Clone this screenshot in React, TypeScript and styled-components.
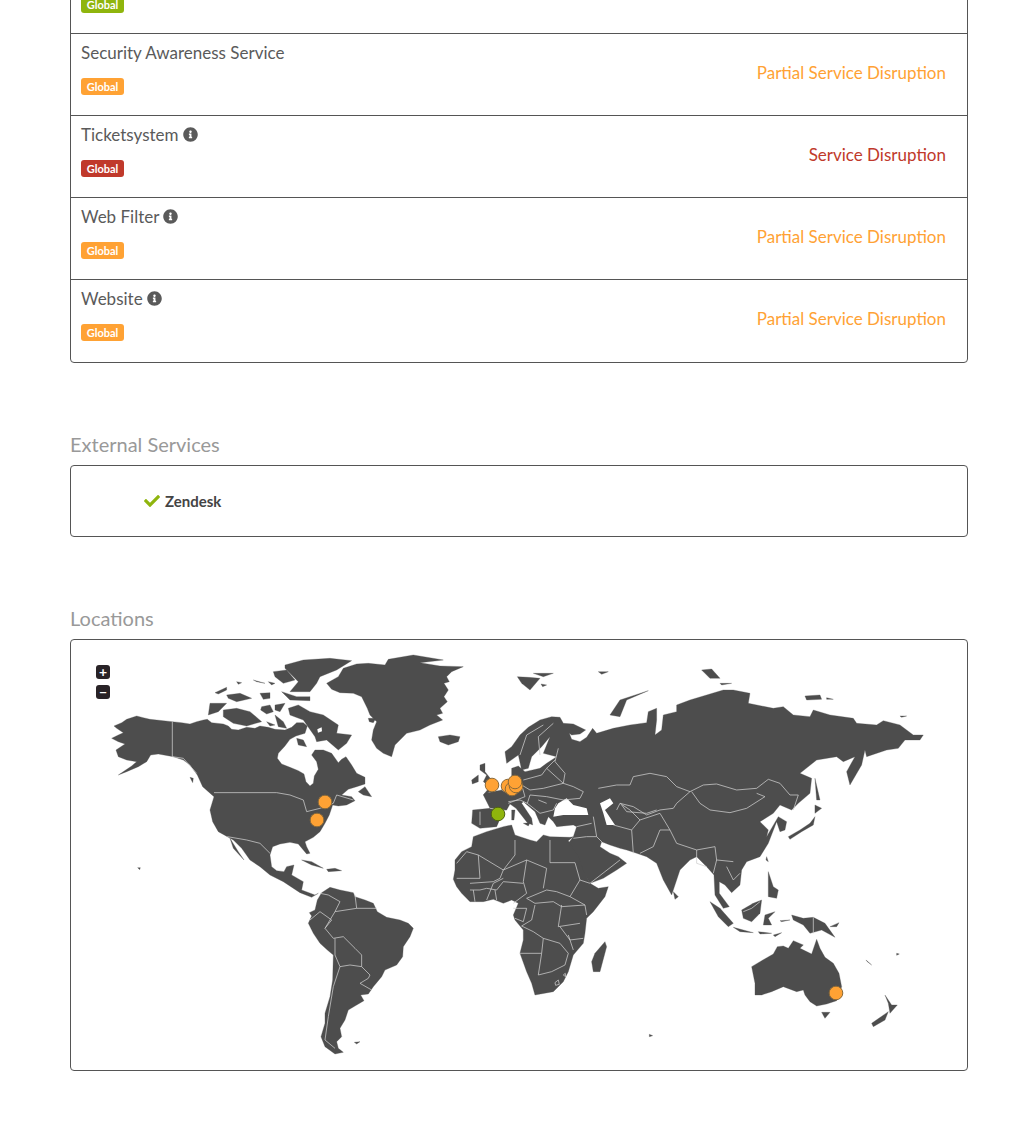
import React from "react";
import styled, { createGlobalStyle } from "styled-components";
import { FaCheck, FaInfoCircle } from "react-icons/fa";

const GlobalStyle = createGlobalStyle`
  html, body {
    margin: 0;
    padding: 0;
    background: #fff;
    font-family: Lato, "Open Sans", sans-serif;
    overflow: hidden;
  }
`;

type Level = "ok" | "partial" | "down";

const levelColor: Record<Level, string> = {
  ok: "#8fb50d",
  partial: "#ffa234",
  down: "#c0392b",
};

const Page = styled.div`
  width: 898px;
  height: 1137px;
  margin-left: 70px;
  overflow: hidden;
`;

const ServiceList = styled.div`
  margin-top: -49px;
  padding-bottom: 1px;
  border: 1px solid #555;
  border-radius: 4px;
`;

const Row = styled.div`
  height: 81px;
  display: flex;
  justify-content: space-between;
  align-items: center;
  padding: 0 21px 0 10px;
  & + & {
    border-top: 1px solid #555;
  }
`;

const RowLeft = styled.div`
  align-self: flex-start;
  display: flex;
  flex-direction: column;
  align-items: flex-start;
  gap: 15px;
  padding-top: 7px;
`;

const Name = styled.div`
  display: flex;
  align-items: center;
  gap: 4px;
  height: 22px;
  font-size: 17px;
  color: #5a5a5a;
  svg {
    width: 15px;
    height: 15px;
  }
`;

const Badge = styled.span<{ $level: Level }>`
  width: 43px;
  height: 17px;
  line-height: 17px;
  text-align: center;
  border-radius: 3px;
  font-size: 11px;
  font-weight: 700;
  color: #fff;
  background: ${(p) => levelColor[p.$level]};
`;

const Status = styled.div<{ $level: Level }>`
  margin-top: -4px;
  font-size: 17px;
  color: ${(p) => levelColor[p.$level]};
`;

const Heading = styled.h3`
  margin: 0 0 9px;
  height: 24px;
  line-height: 24px;
  font-size: 20px;
  font-weight: 400;
  color: #999;
`;

const Section = styled.section`
  margin-top: 69px;
`;

const ExternalBox = styled.div`
  height: 70px;
  display: flex;
  align-items: center;
  padding-left: 73px;
  gap: 5px;
  border: 1px solid #555;
  border-radius: 4px;
  font-size: 15px;
  font-weight: 700;
  color: #444;
  svg {
    width: 16px;
    height: 16px;
    color: #8fb50d;
  }
`;

const MapBox = styled.div`
  position: relative;
  height: 430px;
  border: 1px solid #555;
  border-radius: 4px;
`;

const ZoomControls = styled.div`
  position: absolute;
  top: 25px;
  left: 25px;
  display: flex;
  flex-direction: column;
  gap: 6px;
`;

const ZoomButton = styled.div`
  width: 14px;
  height: 14px;
  line-height: 13px;
  text-align: center;
  border-radius: 3px;
  background: #292327;
  color: #fff;
  font-size: 14px;
  font-weight: 700;
`;

const MapSvg = styled.svg`
  display: block;
`;

const Land = styled.path`
  fill: #4d4d4d;
  stroke: #4d4d4d;
  stroke-width: 0.3px;
  stroke-linejoin: round;
  vector-effect: non-scaling-stroke;
`;

const Sea = styled.path`
  fill: #fff;
`;

const Border = styled.path`
  fill: none;
  stroke: #cfcfcf;
  stroke-width: 0.75px;
  stroke-linejoin: round;
  vector-effect: non-scaling-stroke;
`;

const Pin = styled.circle<{ $level: Level }>`
  fill: ${(p) => levelColor[p.$level]};
  stroke: ${(p) => (p.$level === "ok" ? "#4f6310" : "#8a6a3a")};
  stroke-width: 1px;
`;

// outlines are traced in crop coordinates, one group per crop of the map
const northAmerica = {
  land: [
    "M72 258 95 248 110 238 140 228 160 233 180 238 247 245 275 248 300 252 320 245 340 240 352 238 365 248 400 252 415 258 425 268 445 270 470 262 495 265 510 258 535 262 555 268 585 270 605 262 620 248 640 248 652 258 645 280 618 288 600 298 585 318 565 340 562 355 575 372 600 382 625 392 642 402 648 425 660 438 670 430 673 408 685 388 680 365 665 345 675 330 700 330 725 340 745 368 755 358 768 350 785 375 800 400 825 412 825 432 800 440 775 448 755 465 785 470 795 482 770 495 745 498 728 495 718 525 705 550 690 575 670 592 645 605 650 620 660 640 650 642 640 630 625 612 600 607 570 612 548 620 540 645 545 680 560 692 582 695 590 680 612 675 605 705 640 725 635 750 675 765 685 760 665 772 630 758 580 725 540 705 510 680 480 660 455 625 430 600 412 590 385 575 368 545 360 510 372 470 355 455 338 440 322 405 300 375 280 360 250 350 205 342 182 345 170 365 145 380 110 395 85 405 125 378 140 365 110 360 85 350 78 330 105 312 85 305 65 295 85 285 100 278 80 265Z",
    "M420 595 445 635 462 660 430 625Z",
    "M1120 80 1085 95 1070 110 1078 125 1062 130 1075 150 1062 170 1072 185 1050 205 1058 220 1040 225 1058 240 1020 255 990 270 950 280 930 300 915 315 905 350 880 340 860 325 845 300 850 270 860 245 840 225 832 205 815 170 790 160 750 158 725 148 710 130 745 110 760 85 800 72 835 70 885 75 895 58 970 45 1060 60 990 68 1050 78Z",
    "M585 75 640 60 720 55 785 62 740 90 690 110 680 130 660 155 600 155 625 125 585 85Z",
    "M550 95 590 90 615 120 580 130 555 110Z",
    "M1045 290 1080 285 1110 290 1105 305 1075 315 1050 305Z",
    "M595 205 625 195 660 215 700 225 745 255 740 280 785 285 770 310 745 330 710 300 680 305 675 290 640 240 600 225Z",
    "M400 210 440 205 480 215 515 245 470 258 430 250 400 230Z",
    "M360 190 410 190 385 215 355 225Z",
    "M375 158 410 142 410 150 385 162Z",
    "M410 165 450 160 485 175 440 185 415 175Z",
    "M510 160 540 158 540 175 520 178Z",
    "M575 155 620 170 660 170 660 182 600 180Z",
    "M490 120 525 130 500 125Z",
    "M535 125 555 130 545 135Z",
    "M440 125 455 128 445 133Z",
    "M515 200 540 195 550 215 530 222 512 210Z",
    "M555 195 585 190 570 215 555 210Z",
    "M555 225 580 245 590 265 565 260Z",
    "M620 295 640 300 650 320 625 315Z",
    "M530 245 555 255 540 258Z",
    "M805 455 825 440 845 470 820 465Z",
    "M635 660 665 665 700 685 665 675Z",
    "M710 688 735 685 755 692 715 695Z",
    "M835 235 858 235 850 248 838 245Z",
    "M300 412 310 415 308 428Z",
    "M143 683 151 683 149 689Z",
  ],
  seas: ["M682 268 695 262 696 274 684 278Z"],
  borders: [
    "M247 245 247 350 280 355 320 400",
    "M372 458 560 458 600 465 640 480 650 515 690 505 730 490 740 465 790 480",
    "M412 590 470 600 510 610 540 640",
  ],
};

const eurasia = {
  land: [
    "M195 335 215 320 240 285 265 262 300 240 335 230 360 232 370 250 400 252 437 270 420 282 395 285 388 280 395 298 420 305 440 292 458 265 470 280 520 265 570 255 620 248 625 215 650 205 650 240 645 285 665 270 670 225 710 215 710 195 750 180 800 165 850 150 880 150 930 160 925 190 1000 205 1030 200 1060 225 1110 230 1120 210 1170 225 1240 235 1250 250 1310 255 1330 242 1380 255 1420 285 1450 285 1440 300 1395 300 1375 325 1340 330 1280 350 1275 330 1265 375 1230 435 1220 395 1245 350 1210 365 1190 350 1130 360 1080 400 1115 415 1110 460 1075 490 1055 510 1020 495 1000 520 960 545 985 570 980 590 1015 530 1040 545 1035 570 1020 575 1010 545 985 610 960 650 920 665 905 690 900 735 875 758 855 735 838 725 838 760 868 800 850 805 825 765 822 705 800 680 770 650 750 660 720 690 695 765 670 720 650 670 620 650 590 640 560 630 540 625 510 615 485 605 480 620 510 640 535 650 560 670 530 690 490 715 450 730 420 680 385 610 400 590 410 560 400 555 350 560 340 545 325 530 315 555 300 550 285 515 250 485 245 490 275 535 278 555 262 548 228 505 210 492 200 510 155 510 185 525 170 560 120 565 95 550 98 510 150 505 130 465 135 460 185 450 205 425 240 415 215 410 215 385 235 378 255 395 300 385 320 370 350 350 310 340 330 290 305 320 275 350 265 385 245 390 235 345 200 370Z",
    "M120 375 135 370 135 395 155 420 175 440 150 455 130 465 150 440 130 425 140 405 120 390Z",
    "M95 420 115 405 115 425 97 432Z",
    "M232 110 265 112 300 115 270 150 245 130Z",
    "M280 100 340 100 310 110Z",
    "M303 132 320 135 308 140Z",
    "M510 225 540 180 625 152 560 180 540 230Z",
    "M785 90 815 87 840 115 810 115Z",
    "M840 130 875 130 845 135Z",
    "M475 95 505 95 485 103Z",
    "M1095 168 1140 165 1145 178 1100 180Z",
    "M1160 173 1180 178 1160 178Z",
    "M1380 228 1400 228 1385 232Z",
    "M215 510 225 510 222 540 215 540Z",
    "M250 550 270 548 265 558Z",
    "M1045 590 1080 570 1110 550 1125 530 1120 555 1085 575 1050 598Z",
    "M1125 495 1145 505 1125 520Z",
    "M1125 415 1140 480 1130 480Z",
    "M980 650 985 665 978 660Z",
    "M985 695 1000 740 1015 750 1010 775 985 770Z",
  ],
  seas: [
    "M345 505 355 490 380 475 400 495 440 505 445 525 370 525 340 530Z",
    "M480 490 510 475 520 490 495 510 525 555 500 555 490 520Z",
  ],
  borders: [
    "M475 445 530 435 570 435 580 410 630 400 680 410 710 440 750 455 790 435 830 432 890 450 950 445 985 418 1020 430 1050 465 1075 465 1060 510",
    "M755 455 780 490 810 510 870 518 920 505 975 470 950 460",
    "M750 455 710 490 700 505 660 510 620 525 580 500 540 490 530 510",
    "M540 490 570 510 600 540 630 530 660 520 690 570 660 570 640 620 600 640",
    "M690 570 710 610 770 630 825 620 830 660 880 665",
    "M460 530 470 590 490 610",
    "M575 570 580 640",
    "M520 555 575 570 600 540",
    "M450 730 540 660",
    "M400 595 440 590 470 590",
    "M455 550 410 560",
    "M770 630 770 670 800 680",
    "M830 660 820 700",
    "M860 680 880 720 900 700",
    "M430 455 400 440 370 430 375 400 345 365",
    "M345 360 320 385 305 405 250 420",
    "M320 385 370 430 310 445 270 450 245 435",
    "M430 455 420 475 370 480 320 470 270 465",
    "M245 435 255 470 205 490",
    "M270 465 262 490 300 520 340 510 350 490",
    "M262 490 240 480 205 485",
    "M300 345 295 290 340 250",
    "M240 345 260 285 310 255",
    "M295 480 320 490",
    "M355 325 345 365",
    "M205 460 185 450",
    "M150 505 200 512",
    "M120 515 120 555",
    "M545 495 560 515 620 520 650 510",
  ],
};

const atlanticSouth = {
  land: [
    "M205 250 215 228 208 218 225 210 232 180 245 158 270 142 300 150 340 158 345 170 375 180 400 190 412 215 440 232 480 240 505 250 520 265 510 290 490 320 488 350 470 375 435 390 425 410 400 440 385 462 362 465 372 482 345 498 325 510 315 540 300 565 305 590 290 605 295 625 310 637 285 642 255 620 243 590 255 550 255 520 270 470 278 420 280 345 262 330 240 310 220 280Z",
    "M343 607 360 605 350 612Z",
    "M645 60 665 35 695 20 700 -10 740 -25 790 -40 815 -45 825 -15 840 -10 870 0 890 5 910 -15 930 -10 990 -8 1000 -10 985 2 1015 50 1030 90 1050 130 1075 145 1105 140 1095 170 1060 215 1040 235 1035 280 1030 310 1000 345 985 395 970 425 940 455 885 465 875 430 860 395 840 340 850 300 850 270 825 240 820 225 835 190 815 180 790 190 760 178 730 185 690 185 665 160 650 140 640 118 645 90Z",
    "M1095 305 1100 320 1080 395 1060 395 1055 365 1065 340Z",
  ],
  seas: [],
  borders: [
    "M240 160 265 165 300 185 285 215 255 265 280 295 310 290 345 325 365 345 365 380 390 405 385 415 360 430 395 450",
    "M285 215 350 205 410 205",
    "M345 165 350 205",
    "M210 240 240 215 275 240 255 265",
    "M285 295 285 345 300 380 330 375 365 380",
    "M300 380 280 440 265 530 255 600 285 625",
    "M715 45 720 115 650 115",
    "M650 70 680 35 715 45 790 90 780 115 760 125 690 130",
    "M825 0 825 45 790 90 860 60 920 85 910 145",
    "M860 60 850 125 860 160 820 190",
    "M930 0 930 68 1005 68 1020 120 990 170 950 155 920 150 860 175 885 190 940 185 965 200 1035 195",
    "M1020 120 1050 130",
    "M990 170 1035 195 1040 225",
    "M885 195 875 240 845 258 880 275 910 295 960 310",
    "M965 195 955 260 1020 250",
    "M910 295 905 340 840 340",
    "M905 340 895 405 935 395 975 375 985 340 960 310",
    "M960 260 990 300 1030 295",
    "M790 115 760 130 740 180",
    "M690 150 720 150 740 145 770 150 790 125 850 130",
    "M820 205 860 205 850 245 825 235",
    "M700 150 705 185",
    "M765 150 770 180",
    "M985 285 1000 330",
    "M945 428 955 420 958 433 947 436Z",
    "M970 405 976 400 977 410Z",
  ],
};

const oceania = {
  land: [
    "M210 65 240 85 280 130 265 140 235 110Z",
    "M280 142 340 158 300 155Z",
    "M305 90 340 70 365 60 360 100 335 125 310 115Z",
    "M375 105 405 95 385 115 395 135 370 135Z",
    "M455 105 490 115 520 112 555 130 585 172 545 150 510 160 490 135 460 120Z",
    "M335 260 360 245 400 222 412 200 430 198 445 205 460 182 490 195 480 205 515 222 530 178 540 205 555 232 580 250 597 280 605 320 590 362 560 372 530 378 510 365 495 345 490 330 470 335 430 320 395 335 365 345 345 345 345 310Z",
    "M545 397 570 397 555 415Z",
    "M735 345 755 375 772 375 750 400 745 370Z",
    "M745 395 735 420 700 440 695 430Z",
    "M100 35 115 50 105 58Z",
    "M28 463 38 467 28 470Z",
    "M678 240 695 255 682 245Z",
    "M770 220 778 222 770 226Z",
    "M355 155 395 160 360 162Z",
    "M400 165 425 158 405 170Z",
    "M420 122 450 120 425 125Z",
    "M570 140 597 128 590 140Z",
  ],
  seas: [],
  borders: ["M520 112 520 160", "M310 95 335 85 360 65"],
};

const pins: { x: number; y: number; level: Level }[] = [
  { x: 492, y: 785, level: "partial" },
  { x: 508, y: 786, level: "partial" },
  { x: 512, y: 789, level: "partial" },
  { x: 516, y: 786, level: "partial" },
  { x: 515, y: 782, level: "partial" },
  { x: 325, y: 802, level: "partial" },
  { x: 317, y: 820, level: "partial" },
  { x: 836, y: 993, level: "partial" },
  { x: 498, y: 814, level: "ok" },
];

const CropGroup: React.FC<{
  x: number;
  y: number;
  shapes: { land: string[]; seas: string[]; borders: string[] };
}> = ({ x, y, shapes }) => (
  <g transform={`translate(${x} ${y}) scale(0.3333)`}>
    {shapes.land.map((d) => (
      <Land key={d} d={d} />
    ))}
    {shapes.seas.map((d) => (
      <Sea key={d} d={d} />
    ))}
    {shapes.borders.map((d) => (
      <Border key={d} d={d} />
    ))}
  </g>
);

const services: { name: string; info?: boolean; level: Level; status: string }[] = [
  { name: "\u00a0", level: "ok", status: "" },
  { name: "Security Awareness Service", level: "partial", status: "Partial Service Disruption" },
  { name: "Ticketsystem", info: true, level: "down", status: "Service Disruption" },
  { name: "Web Filter", info: true, level: "partial", status: "Partial Service Disruption" },
  { name: "Website", info: true, level: "partial", status: "Partial Service Disruption" },
];

export default function App() {
  return (
    <Page>
      <GlobalStyle />
      <ServiceList>
        {services.map((s, i) => (
          <Row key={i}>
            <RowLeft>
              <Name>
                {s.name}
                {s.info && <FaInfoCircle />}
              </Name>
              <Badge $level={s.level}>Global</Badge>
            </RowLeft>
            <Status $level={s.level}>{s.status}</Status>
          </Row>
        ))}
      </ServiceList>

      <Section>
        <Heading>External Services</Heading>
        <ExternalBox>
          <FaCheck />
          Zendesk
        </ExternalBox>
      </Section>

      <Section>
        <Heading>Locations</Heading>
        <MapBox>
          <ZoomControls>
            <ZoomButton>+</ZoomButton>
            <ZoomButton>−</ZoomButton>
          </ZoomControls>
          <MapSvg width="896" height="430" viewBox="71 640 896 430">
            <CropGroup x={90} y={640} shapes={northAmerica} />
            <CropGroup x={440} y={640} shapes={eurasia} />
            <CropGroup x={240} y={840} shapes={atlanticSouth} />
            <CropGroup x={640} y={880} shapes={oceania} />
            {pins.map((p) => (
              <Pin key={`${p.x}-${p.y}`} cx={p.x} cy={p.y} r={6.8} $level={p.level} />
            ))}
          </MapSvg>
        </MapBox>
      </Section>
    </Page>
  );
}
